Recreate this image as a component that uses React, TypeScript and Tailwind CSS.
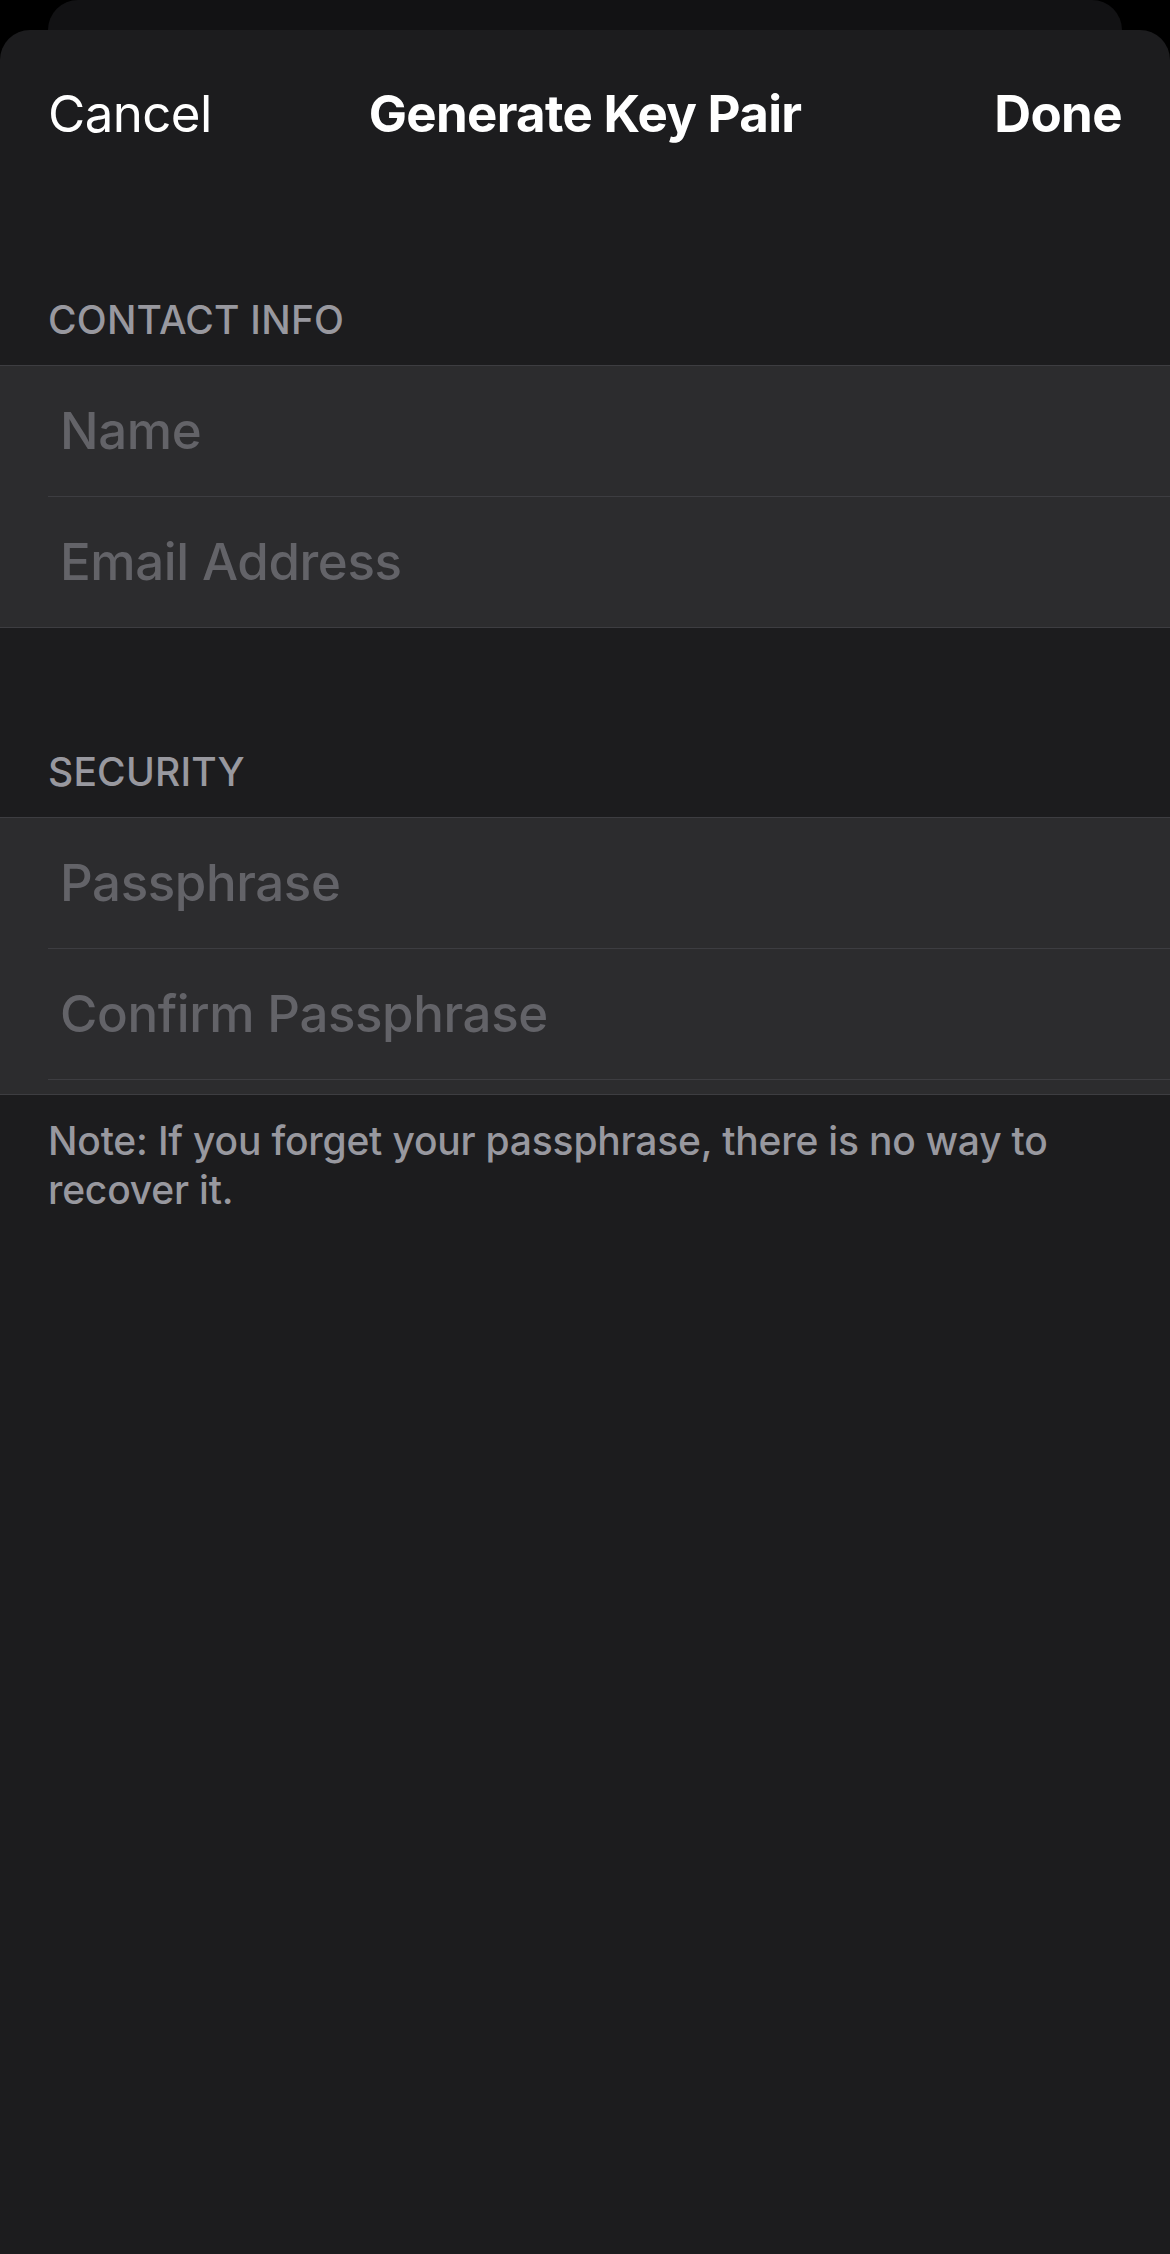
const font = { fontFamily: 'Inter, "Noto Sans", sans-serif' };

function SectionHeader({ title, top }: { title: string; top: string }) {
    return (
        <div className={`${top} pb-[22px] px-[48px]`}>
            <p className="text-[39px] leading-[47px] font-medium text-[#98989f] uppercase tracking-[0.2px]">{title}</p>
        </div>
    );
}

function Field({ placeholder }: { placeholder: string }) {
    return (
        <div className="h-[130px] flex items-center pl-[60px] pr-[48px]">
            <input
                type="text"
                placeholder={placeholder}
                className="w-full bg-transparent text-[51px] font-medium text-white placeholder:text-[#636368] outline-none tracking-[-0.4px]"
                style={font}
            />
        </div>
    );
}

function Separator() {
    return (
        <div className="pl-[48px]">
            <div className="h-px bg-[#3d3d41]" />
        </div>
    );
}

export default function App() {
    return (
        <div className="min-h-[2254px] bg-black flex flex-col" style={font}>
            <div className="relative h-[30px]">
                <div className="absolute left-[48px] right-[48px] top-0 h-[60px] rounded-t-[30px] bg-[#121214]" />
            </div>

            <div className="relative flex-1 rounded-t-[30px] bg-[#1c1c1e] overflow-hidden">
                <div className="h-[168px] grid grid-cols-[1fr_auto_1fr] items-center px-[48px]">
                    <button className="justify-self-start text-[51px] text-white tracking-[-0.6px]">Cancel</button>
                    <h1 className="text-[51px] font-bold text-white tracking-[-0.7px]">Generate Key Pair</h1>
                    <button className="justify-self-end text-[51px] font-bold text-white tracking-[-0.6px]">Done</button>
                </div>

                <SectionHeader title="Contact Info" top="pt-[98px]" />
                <div className="bg-[#2c2c2e] border-y border-[#3d3d41]">
                    <Field placeholder="Name" />
                    <Separator />
                    <Field placeholder="Email Address" />
                </div>

                <SectionHeader title="Security" top="pt-[120px]" />
                <div className="bg-[#2c2c2e] border-y border-[#3d3d41]">
                    <Field placeholder="Passphrase" />
                    <Separator />
                    <Field placeholder="Confirm Passphrase" />
                    <Separator />
                    <div className="h-[14px]" />
                </div>

                <p className="pt-[21px] px-[48px] text-[39px] leading-[49px] font-medium text-[#98989f] tracking-[-0.2px]">
                    Note: If you forget your passphrase, there is no way to recover it.
                </p>
            </div>
        </div>
    );
}
